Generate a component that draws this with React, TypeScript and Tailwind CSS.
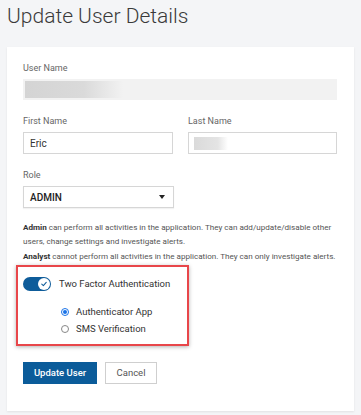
export default function App() {
  return (
    <div className="min-h-[415px] w-[361px] bg-[#f4f5f7] font-['Roboto',sans-serif] text-[#333]">
      <h1 className="pl-[7px] pt-[2px] text-[21px] font-light leading-[28px] text-[#3a3a3a]">Update User Details</h1>

      <div className="mx-[7px] mt-[17px] bg-white pb-[27px] pl-4 pr-[17px] pt-[15px] shadow-[0_1px_2px_rgba(0,0,0,0.08)]">
        {/* User name */}
        <label className="block text-[9px] leading-[12px] text-[#666]">User Name</label>
        <div className="mt-[5px] flex h-[21px] items-center bg-[#f2f2f2] px-[2px]">
          <div className="h-[17px] w-[98px] bg-[linear-gradient(90deg,#d4d4d4_0%,#dadada_60%,rgba(242,242,242,0)_100%)]" />
        </div>

        {/* First / last name */}
        <div className="mt-[15px] grid grid-cols-2 gap-4">
          <div>
            <label className="block text-[9px] leading-[12px] text-[#666]">First Name</label>
            <div className="mt-[5px] flex h-[22px] w-[150px] items-center border border-[#d6d6d6] px-[6px] text-[10px] text-[#333]">
              Eric
            </div>
          </div>
          <div>
            <label className="block text-[9px] leading-[12px] text-[#666]">Last Name</label>
            <div className="mt-[5px] flex h-[22px] items-center border border-[#d6d6d6] px-[5px]">
              <div className="h-[13px] w-[34px] bg-[linear-gradient(90deg,#dadada_0%,#e4e4e4_70%,rgba(255,255,255,0)_100%)]" />
            </div>
          </div>
        </div>

        {/* Role */}
        <label className="mt-[15px] block text-[9px] leading-[12px] text-[#666]">Role</label>
        <div className="mt-[5px] flex h-[22px] w-[151px] items-center justify-between border border-[#d6d6d6] pl-[6px] pr-[8px] shadow-[0_1px_1px_rgba(0,0,0,0.05)]">
          <span className="text-[10px] font-medium text-[#222]">ADMIN</span>
          <span className="h-0 w-0 border-x-[3px] border-t-[4px] border-x-transparent border-t-[#222]" />
        </div>

        {/* Description */}
        <div className="mt-[12px] text-[8.1px] leading-[14px] text-[#555]">
          <p>
            <span className="font-bold text-[#333]">Admin</span> can perform all activities in the application. They can add/update/disable other users, change settings and investigate alerts.
          </p>
          <p className="mt-[1px]">
            <span className="font-bold text-[#333]">Analyst</span> cannot perform all activities in the application. They can only investigate alerts.
          </p>
        </div>

        {/* Two factor box */}
        <div className="-ml-[7px] mt-[2px] w-[173px] border-2 border-[#e8464a] pb-[9px] pl-[5px] pt-[10px] shadow-[0_1px_4px_rgba(0,0,0,0.3)]">
          <div className="flex items-center gap-[8px]">
            <div className="flex h-[14px] w-[28px] items-center justify-end rounded-full bg-[#0e5c9a] pr-[1px]">
              <span className="flex h-[12px] w-[12px] items-center justify-center rounded-full bg-white">
                <svg width="8" height="8" viewBox="0 0 10 10" fill="none">
                  <path d="M2.2 5.2 L4.2 7 L7.8 3" stroke="#0e5c9a" strokeWidth="1.3" strokeLinecap="round" strokeLinejoin="round" />
                </svg>
              </span>
            </div>
            <span className="text-[9.5px] text-[#333]">Two Factor Authentication</span>
          </div>

          <div className="ml-[38px] mt-[15px] flex flex-col gap-[5px]">
            <div className="flex items-center gap-[7px]">
              <span className="flex h-[8px] w-[8px] items-center justify-center rounded-full border border-[#1a73e8]">
                <span className="h-[4px] w-[4px] rounded-full bg-[#1a73e8]" />
              </span>
              <span className="text-[9.5px] leading-[12px] text-[#333]">Authenticator App</span>
            </div>
            <div className="flex items-center gap-[7px]">
              <span className="h-[8px] w-[8px] rounded-full border border-[#888]" />
              <span className="text-[9.5px] leading-[12px] text-[#333]">SMS Verification</span>
            </div>
          </div>
        </div>

        {/* Buttons */}
        <div className="mt-[16px] flex gap-2">
          <button className="h-[22px] w-[74px] bg-[#0b5c9a] text-[9.5px] font-medium text-white">Update User</button>
          <button className="h-[22px] w-[52px] border border-[#cfcfcf] bg-white text-[9.5px] text-[#555]">Cancel</button>
        </div>
      </div>
    </div>
  )
}
